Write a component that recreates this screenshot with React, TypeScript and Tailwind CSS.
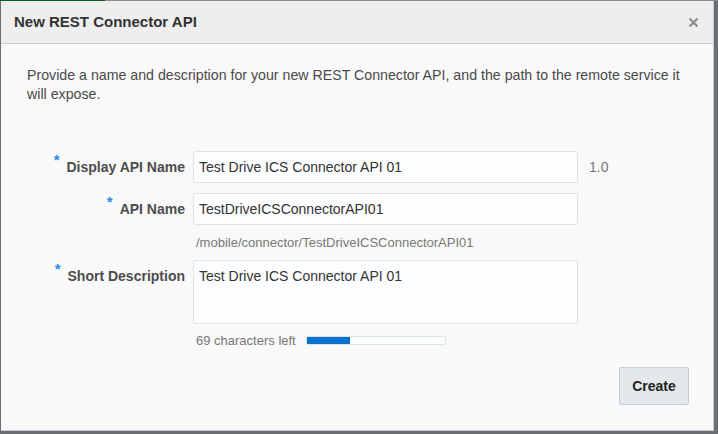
import { useState } from "react";

function Req() {
  return <span className="mr-[7px] self-start pt-[1px] text-[15px] leading-none text-[#2d8ae0]">*</span>;
}

export default function App() {
  const [displayName, setDisplayName] = useState("Test Drive ICS Connector API 01");
  const [apiName, setApiName] = useState("TestDriveICSConnectorAPI01");
  const [desc, setDesc] = useState("Test Drive ICS Connector API 01");

  const left = 100 - desc.length;
  const used = (desc.length / 100) * 100;

  return (
    <div className="h-[434px] w-[718px] overflow-hidden bg-[#6b6f73] font-['Liberation_Sans',Arial,sans-serif]">
      {/* strip of the page behind */}
      <div className="flex h-[1px]">
        <div className="w-[105px] bg-[#0b5a2c]" />
        <div className="flex-1 bg-[#8a8f94]" />
      </div>
      <div className="ml-[1px] flex h-[430px] w-[713px] flex-col border-b border-r border-[#c4ced7] bg-[#f9f9f9]">
        {/* header */}
        <div className="flex h-[43px] shrink-0 items-center justify-between border-b border-[#c4ced7] bg-[#eeeeee] pl-[13px] pr-[14px]">
          <h1 className="text-[15px] font-bold text-[#333333]">New REST Connector API</h1>
          <button className="text-[#8c8c8c]">
            <svg width="11" height="11" viewBox="0 0 11 11">
              <path d="M1.5 1.5 L9.5 9.5 M9.5 1.5 L1.5 9.5" stroke="currentColor" strokeWidth="2.2" />
            </svg>
          </button>
        </div>

        {/* body */}
        <div className="flex flex-1 flex-col pt-[22px]">
          <p className="pl-[26px] pr-[20px] text-[14.2px] leading-[19px] text-[#4a4a4a]">
            Provide a name and description for your new REST Connector API, and the path to the remote service it will expose.
          </p>

          <div className="mt-[47px] grid grid-cols-[184px_385px_auto] gap-x-[8px] text-[14px]">
            <label className="flex h-[32px] items-center justify-end font-bold text-[#4d4d4d]">
              <Req />
              Display API Name
            </label>
            <input
              className="h-[32px] w-full rounded-[2px] border border-[#dfe4e7] bg-[#fcfdfe] px-[5px] text-[14px] text-[#333333] outline-none"
              value={displayName}
              onChange={(e) => setDisplayName(e.target.value)}
            />
            <span className="flex h-[32px] items-center pl-[3px] text-[#777777]">1.0</span>

            <label className="mt-[10px] flex h-[32px] items-center justify-end font-bold text-[#4d4d4d]">
              <Req />
              API Name
            </label>
            <input
              className="mt-[10px] h-[32px] w-full rounded-[2px] border border-[#dfe4e7] bg-[#fcfdfe] px-[5px] text-[14px] text-[#333333] outline-none"
              value={apiName}
              onChange={(e) => setApiName(e.target.value)}
            />
            <span />

            <span />
            <span className="flex h-[35px] items-center pl-[3px] text-[13px] text-[#777777]">
              /mobile/connector/{apiName}
            </span>
            <span />

            <label className="flex h-[32px] items-center justify-end font-bold text-[#4d4d4d]">
              <Req />
              Short Description
            </label>
            <textarea
              className="block h-[64px] w-full resize-none rounded-[2px] border border-[#dfe4e7] bg-[#fcfdfe] px-[5px] pt-[6px] text-[14px] leading-[19px] text-[#333333] outline-none"
              value={desc}
              onChange={(e) => setDesc(e.target.value.slice(0, 100))}
            />
            <span />

            <span />
            <div className="mt-[7px] flex items-center gap-[10px] pl-[3px]">
              <span className="text-[13px] text-[#777777]">{left} characters left</span>
              <div className="h-[9px] w-[140px] rounded-[1px] border border-[#dfe4e7] bg-[#fcfdfe]">
                <div className="h-full bg-[#0572ce]" style={{ width: `${used}%` }} />
              </div>
            </div>
            <span />
          </div>

          <div className="mt-auto flex justify-end pb-[25px] pr-[24px]">
            <button className="h-[38px] w-[70px] rounded-[2px] border border-[#c4ced7] bg-[#e4e8ea] text-[14px] font-bold text-[#222222]">
              Create
            </button>
          </div>
        </div>
      </div>
    </div>
  );
}
